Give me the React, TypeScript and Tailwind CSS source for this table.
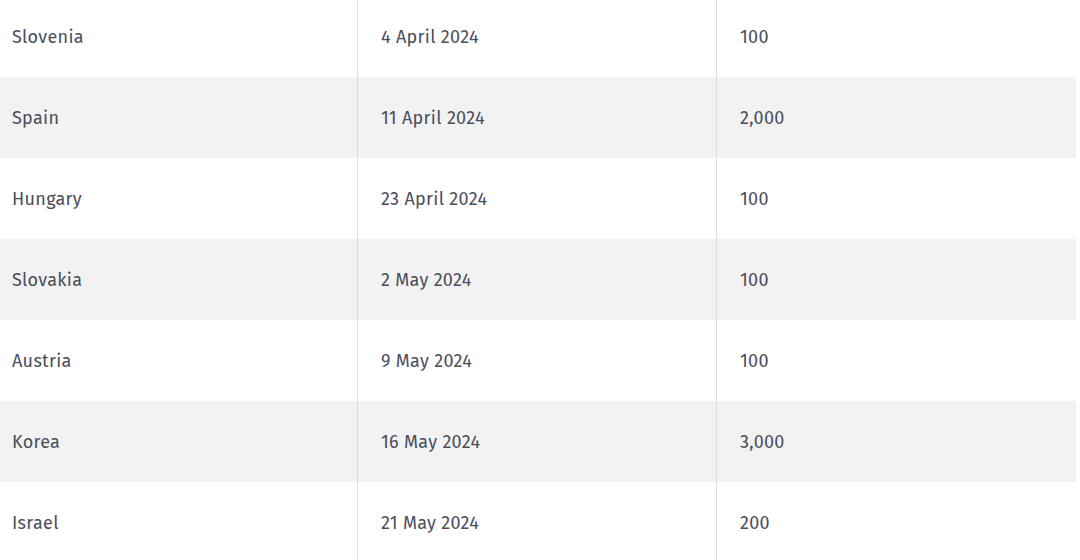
import React from "react";

const rows = [
  ["Slovenia", "4 April 2024", "100"],
  ["Spain", "11 April 2024", "2,000"],
  ["Hungary", "23 April 2024", "100"],
  ["Slovakia", "2 May 2024", "100"],
  ["Austria", "9 May 2024", "100"],
  ["Korea", "16 May 2024", "3,000"],
  ["Israel", "21 May 2024", "200"],
];

export default function App() {
  return (
    <div
      className="w-[1080px] h-[560px] overflow-hidden bg-white text-[18px] tracking-[0.3px] text-[#4b4e5a]"
      style={{ fontFamily: '"Fira Sans", "Open Sans", "Noto Sans", sans-serif' }}
    >
      <div className="w-[1076px] -mt-[4px] flex flex-col">
        {rows.map((r, i) => (
          <div
            key={i}
            className={`grid grid-cols-[357px_359px_360px] h-[81px] ${i % 2 === 1 ? "bg-[#f2f2f2]" : "bg-white"}`}
          >
            <div className="flex items-center pl-[12px] pt-[2px]">{r[0]}</div>
            <div className="flex items-center pl-[23px] pt-[2px] border-l border-[#dddddd]">{r[1]}</div>
            <div className="flex items-center pl-[23px] pt-[2px] border-l border-[#dddddd]">{r[2]}</div>
          </div>
        ))}
      </div>
    </div>
  );
}
